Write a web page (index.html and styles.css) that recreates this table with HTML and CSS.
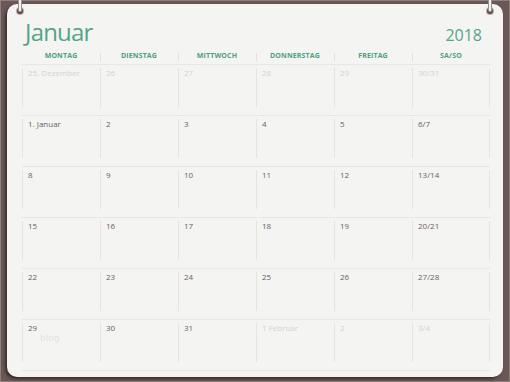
FILE: index.html
```html
<!DOCTYPE html>
<html lang="de">
<head>
<meta charset="utf-8">
<title>Januar 2018</title>
<link rel="stylesheet" href="styles.css">
</head>
<body>
<div class="frame">
  <div class="card">
    <span class="ring ring-left"><span class="hole"></span><span class="bar"></span></span>
    <span class="ring ring-right"><span class="hole"></span><span class="bar"></span></span>
    <header class="title-row">
      <h1 class="month">Januar</h1>
      <div class="year">2018</div>
    </header>
    <div class="weekdays">
      <div class="wd">MONTAG</div>
      <div class="wd">DIENSTAG</div>
      <div class="wd">MITTWOCH</div>
      <div class="wd">DONNERSTAG</div>
      <div class="wd">FREITAG</div>
      <div class="wd">SA/SO</div>
    </div>
    <div class="weeks">
      <div class="week">
        <div class="day muted"><div class="box">25. Dezember</div></div>
        <div class="day muted"><div class="box">26</div></div>
        <div class="day muted"><div class="box">27</div></div>
        <div class="day muted"><div class="box">28</div></div>
        <div class="day muted"><div class="box">29</div></div>
        <div class="day muted last"><div class="box">30/31</div></div>
      </div>
      <div class="week">
        <div class="day"><div class="box">1. Januar</div></div>
        <div class="day"><div class="box">2</div></div>
        <div class="day"><div class="box">3</div></div>
        <div class="day"><div class="box">4</div></div>
        <div class="day"><div class="box">5</div></div>
        <div class="day last"><div class="box">6/7</div></div>
      </div>
      <div class="week">
        <div class="day"><div class="box">8</div></div>
        <div class="day"><div class="box">9</div></div>
        <div class="day"><div class="box">10</div></div>
        <div class="day"><div class="box">11</div></div>
        <div class="day"><div class="box">12</div></div>
        <div class="day last"><div class="box">13/14</div></div>
      </div>
      <div class="week">
        <div class="day"><div class="box">15</div></div>
        <div class="day"><div class="box">16</div></div>
        <div class="day"><div class="box">17</div></div>
        <div class="day"><div class="box">18</div></div>
        <div class="day"><div class="box">19</div></div>
        <div class="day last"><div class="box">20/21</div></div>
      </div>
      <div class="week">
        <div class="day"><div class="box">22</div></div>
        <div class="day"><div class="box">23</div></div>
        <div class="day"><div class="box">24</div></div>
        <div class="day"><div class="box">25</div></div>
        <div class="day"><div class="box">26</div></div>
        <div class="day last"><div class="box">27/28</div></div>
      </div>
      <div class="week">
        <div class="day"><div class="box">29<span class="watermark">blog</span></div></div>
        <div class="day"><div class="box">30</div></div>
        <div class="day"><div class="box">31</div></div>
        <div class="day muted"><div class="box">1 Februar</div></div>
        <div class="day muted"><div class="box">2</div></div>
        <div class="day muted last"><div class="box">3/4</div></div>
      </div>
    </div>
  </div>
</div>
</body>
</html>
```
FILE: styles.css
```css
* {
  box-sizing: border-box;
  margin: 0;
  padding: 0;
}

html,
body {
  width: 510px;
  height: 382px;
  overflow: hidden;
}

body {
  background: #6c5757;
  font-family: "Open Sans", "Noto Sans", sans-serif;
}

.frame {
  width: 510px;
  height: 382px;
  padding: 4px 7px 5px 7px;
  box-shadow: inset 0 0 0 1px #8e7f7f;
}

.card {
  position: relative;
  width: 496px;
  height: 373px;
  background: #f4f4f3;
  border-radius: 10px;
  padding: 0 13px 0 15px;
  box-shadow: -2px 2px 3px rgba(35, 20, 20, 0.65);
}

/* binder rings */
.ring {
  position: absolute;
  top: -4px;
  width: 8px;
  height: 22px;
}

.ring-left {
  left: 9px;
}

.ring-right {
  left: 479px;
}

.ring .hole {
  position: absolute;
  left: 1px;
  top: 8px;
  width: 6px;
  height: 6px;
  border-radius: 50%;
  background: #5e4a4a;
  box-shadow: 0 0 0 1px #b9adad;
}

.ring .bar {
  position: absolute;
  left: 2px;
  top: 0;
  width: 4px;
  height: 12px;
  background: #f2f2f2;
  border: 1px solid #9a8d8d;
  border-top: 0;
  border-radius: 0 0 2px 2px;
}

/* title */
.title-row {
  height: 42px;
  display: flex;
  justify-content: space-between;
  align-items: baseline;
  padding: 13px 8px 0 3px;
  color: #54a586;
}

.month {
  font-size: 24px;
  font-weight: 400;
  line-height: 30px;
  letter-spacing: -0.8px;
}

.year {
  font-size: 16px;
  line-height: 20px;
}

/* weekday header */
.weekdays {
  display: grid;
  grid-template-columns: repeat(6, 78px);
  height: 19px;
  border-bottom: 1px solid #e9e7df;
}

.wd {
  padding-top: 4px;
  font-size: 7px;
  font-weight: 700;
  line-height: 12px;
  text-align: center;
  color: #4c9f80;
  letter-spacing: 0.15px;
}

.wd + .wd {
  background: linear-gradient(#e3e1d9, #e3e1d9) left 7px / 1px 8px no-repeat;
}

/* weeks */
.week {
  display: grid;
  grid-template-columns: repeat(6, 78px);
  height: 51px;
  border-bottom: 1px solid #e9e7df;
}

.day {
  padding-top: 3px;
  color: #6a5f5f;
}

.day.muted {
  color: #d6d2d1;
}

.box {
  position: relative;
  height: 39px;
  border-left: 1px solid #e6e4dc;
  padding: 0 0 0 5px;
  font-size: 8px;
  line-height: 10px;
}

.last .box {
  border-right: 1px solid #e6e4dc;
}

.watermark {
  position: absolute;
  left: 17px;
  top: 10px;
  font-family: "DejaVu Sans", sans-serif;
  font-size: 9px;
  font-weight: 300;
  color: #d4d0cf;
}
```
